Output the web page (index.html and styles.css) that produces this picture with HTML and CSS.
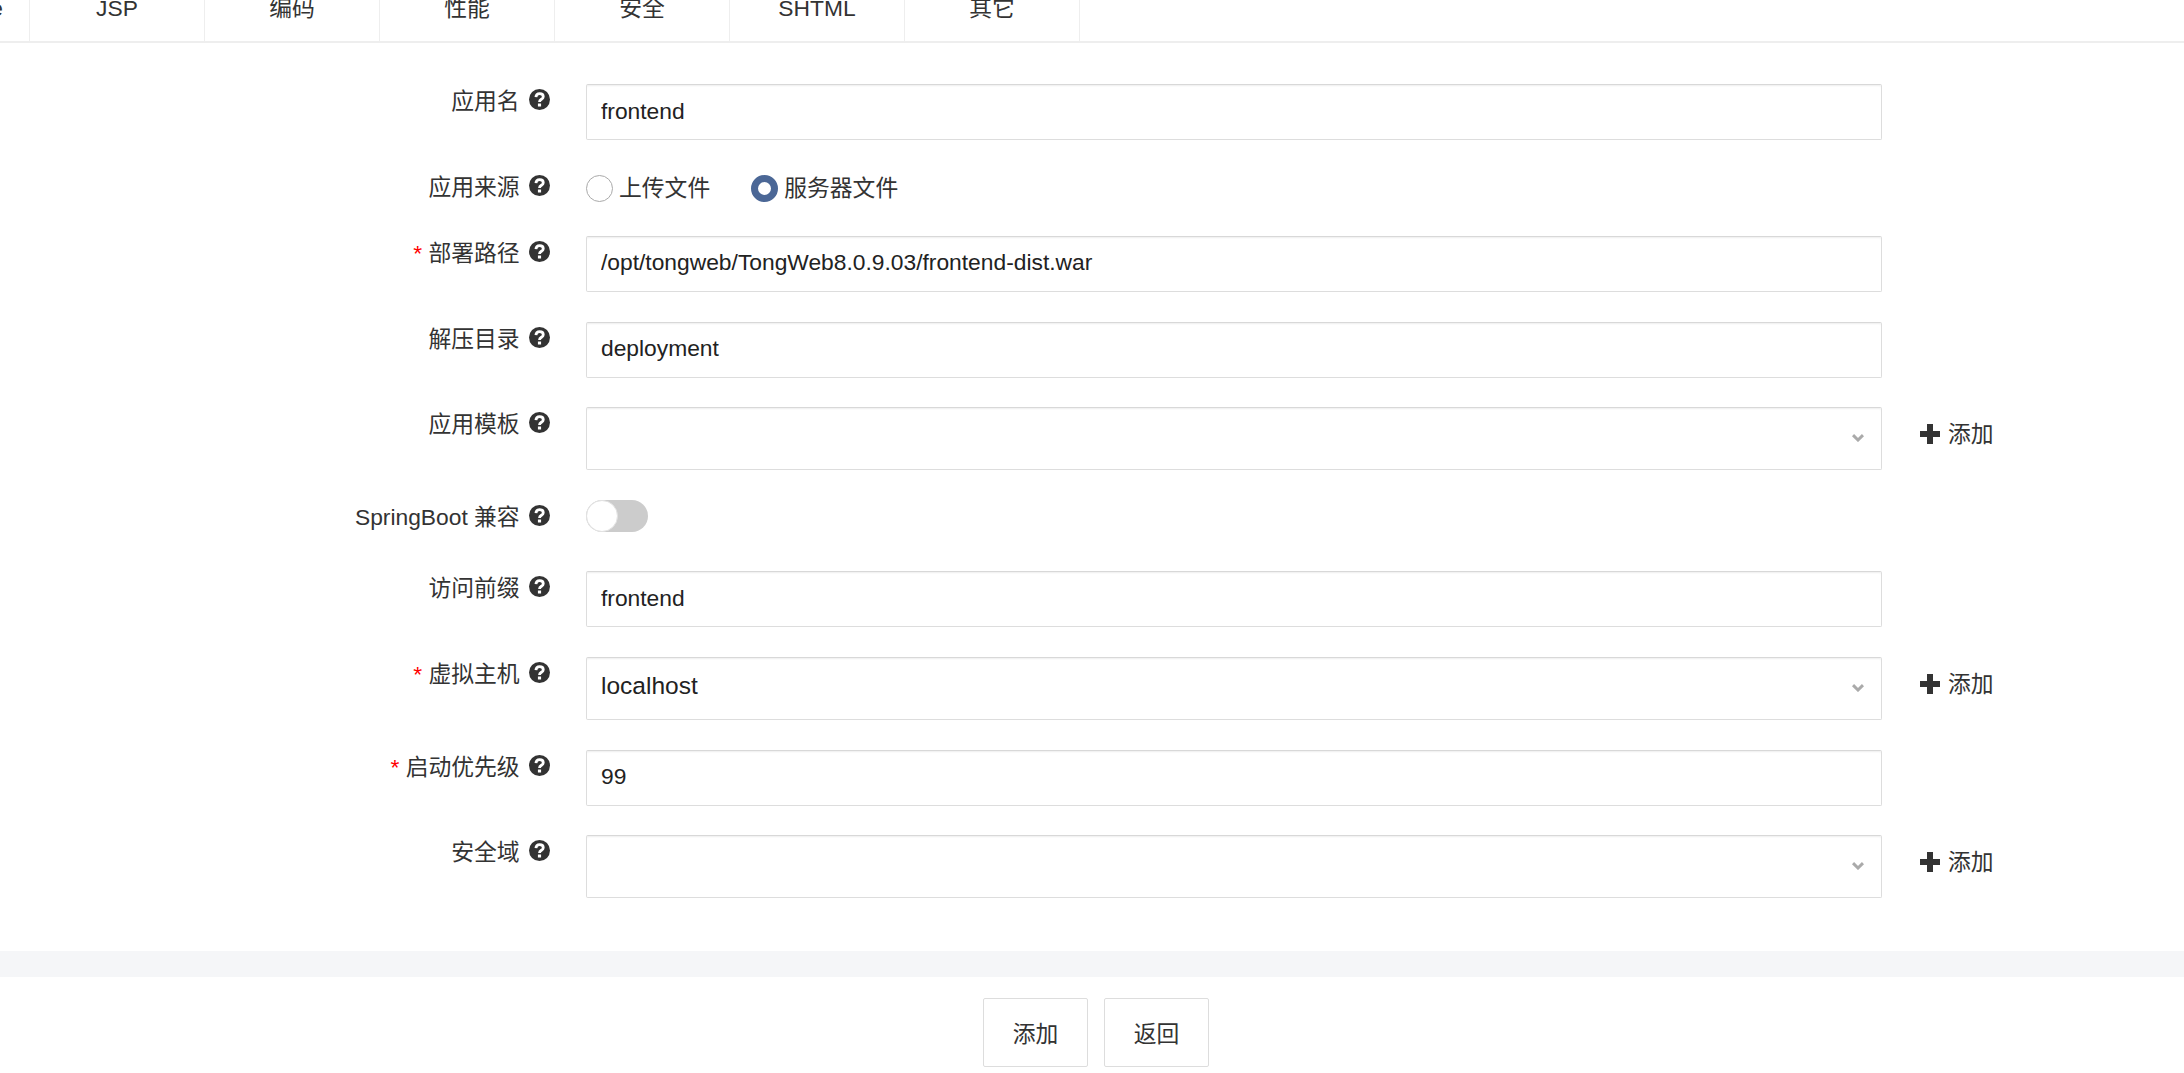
FILE: index.html
```html
<!DOCTYPE html>
<html lang="zh">
<head>
    <meta charset="UTF-8">
    <meta name="viewport" content="width=device-width, initial-scale=1.0">
    <title>添加应用</title>
    <link rel="stylesheet" href="styles.css">
</head>
<body>
    <svg class="icon-defs" width="0" height="0">
        <symbol id="help" viewBox="0 0 24 24">
            <circle cx="12" cy="12" r="12" fill="#333"></circle>
            <path d="M7.9 9.3c.2-2.6 2-4 4.300-4 2.400 0 4.100 1.500 4.100 3.500 0 3-4.300 2.900-4.300 6" fill="none" stroke="#fff" stroke-width="3.2"></path>
            <rect x="10.200" y="16.600" width="3.600" height="3.400" fill="#fff"></rect>
        </symbol>
        <symbol id="plus" viewBox="0 0 20 20">
            <path d="M7 0h6v7h7v6h-7v7H7v-7H0V7h7z" fill="#333"></path>
        </symbol>
        <symbol id="chevron" viewBox="0 0 12 8">
            <path d="M1 1.200L6 6l5-4.800" fill="none" stroke="#aaa" stroke-width="3"></path>
        </symbol>
    </svg>

    <div class="tabs">
        <div class="tab tab-first">Resource</div>
        <div class="tab">JSP</div>
        <div class="tab">编码</div>
        <div class="tab">性能</div>
        <div class="tab">安全</div>
        <div class="tab">SHTML</div>
        <div class="tab">其它</div>
    </div>

    <form class="form">
        <div class="form-row">
            <label class="form-label">应用名 <svg class="help"><use href="#help"></use></svg></label>
            <div class="form-control"><input class="input" type="text" value="frontend"></div>
        </div>
        <div class="form-row row-radio">
            <label class="form-label">应用来源 <svg class="help"><use href="#help"></use></svg></label>
            <div class="form-control radio-group">
                <span class="radio-item"><span class="radio"></span>上传文件</span>
                <span class="radio-item"><span class="radio checked"></span>服务器文件</span>
            </div>
        </div>
        <div class="form-row">
            <label class="form-label"><span class="required">*</span> 部署路径 <svg class="help"><use href="#help"></use></svg></label>
            <div class="form-control"><input class="input" type="text" value="/opt/tongweb/TongWeb8.0.9.03/frontend-dist.war"></div>
        </div>
        <div class="form-row">
            <label class="form-label">解压目录 <svg class="help"><use href="#help"></use></svg></label>
            <div class="form-control"><input class="input" type="text" value="deployment"></div>
        </div>
        <div class="form-row">
            <label class="form-label">应用模板 <svg class="help"><use href="#help"></use></svg></label>
            <div class="form-control select">
                <span class="select-value"></span>
                <svg class="chevron"><use href="#chevron"></use></svg>
            </div>
            <a class="add-link"><svg class="plus"><use href="#plus"></use></svg>添加</a>
        </div>
        <div class="form-row row-switch">
            <label class="form-label">SpringBoot 兼容 <svg class="help"><use href="#help"></use></svg></label>
            <div class="switch"><span class="switch-knob"></span></div>
        </div>
        <div class="form-row">
            <label class="form-label">访问前缀 <svg class="help"><use href="#help"></use></svg></label>
            <div class="form-control"><input class="input" type="text" value="frontend"></div>
        </div>
        <div class="form-row">
            <label class="form-label"><span class="required">*</span> 虚拟主机 <svg class="help"><use href="#help"></use></svg></label>
            <div class="form-control select">
                <span class="select-value">localhost</span>
                <svg class="chevron"><use href="#chevron"></use></svg>
            </div>
            <a class="add-link"><svg class="plus"><use href="#plus"></use></svg>添加</a>
        </div>
        <div class="form-row">
            <label class="form-label"><span class="required">*</span> 启动优先级 <svg class="help"><use href="#help"></use></svg></label>
            <div class="form-control"><input class="input" type="text" value="99"></div>
        </div>
        <div class="form-row">
            <label class="form-label">安全域 <svg class="help"><use href="#help"></use></svg></label>
            <div class="form-control select">
                <span class="select-value"></span>
                <svg class="chevron"><use href="#chevron"></use></svg>
            </div>
            <a class="add-link"><svg class="plus"><use href="#plus"></use></svg>添加</a>
        </div>
    </form>

    <div class="band"></div>

    <div class="actions">
        <button class="btn" type="button">添加</button>
        <button class="btn" type="button">返回</button>
    </div>
</body>
</html>
```

FILE: styles.css
```css
html, body {
    height: 100%;
    overflow: hidden;
}
body {
    margin: 0;
    background: #fff;
    color: #333;
    font-family: "Liberation Sans", "Noto Sans CJK SC", sans-serif;
    font-size: 22.8px;
}
.icon-defs {
    display: block;
    height: 0;
}

/* tabs, scrolled partly out of view */
.tabs {
    display: flex;
    height: 64px;
    margin-top: -23px;
    border-bottom: 2px solid #eee;
}
.tab {
    flex: none;
    width: 175px;
    box-sizing: border-box;
    border-right: 1px solid #eee;
    line-height: 62px;
    text-align: center;
}
.tab-first {
    margin-left: -145px;
    padding-right: 26px;
    text-align: right;
}

/* form */
.form {
    display: flex;
    flex-direction: column;
    gap: 29.8px;
    padding-top: 41.25px;
}
.form-row {
    display: flex;
    align-items: flex-start;
}
.form-label {
    flex: none;
    width: 550px;
    margin-right: 36px;
    line-height: 34px;
    text-align: right;
    white-space: nowrap;
}
.help {
    width: 21px;
    height: 21px;
    margin-left: 3px;
    vertical-align: -1px;
}
.required {
    color: #f00;
}
.form-control {
    flex: none;
    width: 1296px;
}
.input {
    display: block;
    width: 100%;
    height: 56px;
    box-sizing: border-box;
    padding: 0 14px 2px;
    border: 1px solid #ddd;
    border-top-color: #d8d8d8;
    border-radius: 2px;
    box-shadow: inset 0 2px 2px -1px #eee;
    color: #222;
    font: inherit;
    outline: none;
}
.select {
    position: relative;
    height: 63px;
    box-sizing: border-box;
    padding: 0 14px;
    border: 1px solid #ddd;
    border-top-color: #d8d8d8;
    border-radius: 2px;
    box-shadow: inset 0 2px 2px -1px #eee;
    color: #222;
    font-size: 24.5px;
    line-height: 56px;
}
.chevron {
    position: absolute;
    top: 26px;
    right: 17px;
    width: 12px;
    height: 8px;
}
.add-link {
    display: flex;
    align-items: center;
    margin-left: 38px;
    padding-top: 10px;
    line-height: 34px;
}
.plus {
    width: 20px;
    height: 20px;
    margin-right: 8px;
}

/* radio */
.row-radio {
    height: 36px;
}
.radio-group {
    display: flex;
    gap: 41px;
    line-height: 34px;
}
.radio-item {
    display: flex;
    align-items: center;
    height: 36px;
}
.radio {
    width: 27px;
    height: 27px;
    box-sizing: border-box;
    margin-right: 6px;
    border: 1px solid #aaa;
    border-radius: 50%;
    background: #fff;
}
.radio.checked {
    border: 7px solid #4b6796;
}

/* switch */
.row-switch {
    height: 41px;
}
.switch {
    width: 62px;
    height: 32px;
    border-radius: 16px;
    background: #ccc;
}
.switch-knob {
    display: block;
    width: 32px;
    height: 32px;
    box-sizing: border-box;
    border: 1px solid #e2e2e2;
    border-radius: 50%;
    background: #fff;
}

/* footer */
.band {
    height: 26px;
    margin-top: 53px;
    background: #f5f6f8;
}
.actions {
    display: flex;
    justify-content: center;
    gap: 16px;
    padding: 21px 0 0 8px;
}
.btn {
    width: 105px;
    height: 69px;
    padding: 0;
    border: 1px solid #ddd;
    border-radius: 2px;
    background: #fff;
    color: #333;
    font: inherit;
}
```
